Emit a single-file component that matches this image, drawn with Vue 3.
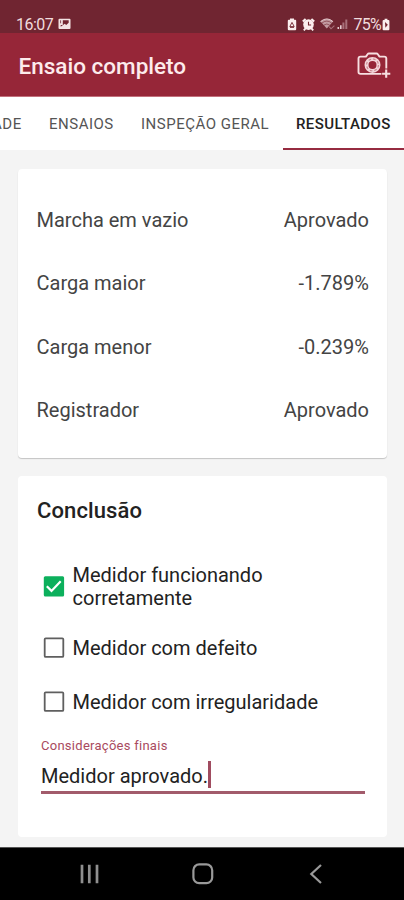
<template>
  <div class="screen">
    <!-- barra de status -->
    <div class="status-bar">
      <div class="status-left">
        <span class="clock">16:07</span>
        <svg class="picture-icon" width="13" height="12" viewBox="0 0 13 12">
          <rect x="0.5" y="0.7" width="12" height="10.4" rx="1" fill="#f3e3e4" />
          <path d="M4.8 2.3h5.9v2.4l-2.5 2.2-1.5-1.1-4 2.9V6.9h2.1z" fill="#722530" />
          <path d="M2.6 2.3v3" stroke="#722530" stroke-width="0.8" />
        </svg>
      </div>
      <div class="status-right">
        <svg width="10" height="13" viewBox="0 0 10 13">
          <path d="M3 0.5h4v1.2h1.2q1 0 1 1v8.6q0 1-1 1H1.8q-1 0-1-1V2.7q0-1 1-1H3z" fill="#fbeeee" />
          <path d="M5 4.4L7.2 8.6H2.8zM3 9.4h4" fill="none" stroke="#722530" stroke-width="0.9" />
        </svg>
        <svg class="alarm-icon" width="13" height="13" viewBox="0 0 13 13">
          <path d="M0.8 3.4L3.6 0.9M12.2 3.4L9.4 0.9" stroke="#fbeeee" stroke-width="2" />
          <path d="M1.8 12.4l2-2.2M11.2 12.4l-2-2.2" stroke="#fbeeee" stroke-width="1.9" />
          <circle cx="6.5" cy="6.6" r="5.3" fill="#fbeeee" />
          <path d="M6.5 3.8v3.2h2.6" fill="none" stroke="#722530" stroke-width="1.1" />
        </svg>
        <svg class="wifi-icon" width="15" height="12" viewBox="0 0 15 12">
          <path d="M0.5 3.6Q6.8-1.8 13.1 3.6L6.8 10.4z" fill="#c39aa0" />
          <path d="M2 5q4.8-3.8 9.6 0M4 7q2.8-2 5.6 0" fill="none" stroke="#722530" stroke-width="0.6" />
          <path d="M0.5 3.6Q6.8-1.8 13.1 3.6" fill="none" stroke="#e5ccd0" stroke-width="1" />
          <path d="M9.2 8.6l1.8 2.2L14.4 7.6" fill="none" stroke="#a8717a" stroke-width="1.1" />
        </svg>
        <svg class="signal-icon" width="11" height="12" viewBox="0 0 11 12">
          <path d="M1.3 11V9M3.8 11V7.2" stroke="#e5ccd0" stroke-width="1.6" />
          <path d="M6.4 11V4.4M9.3 11V1.4" stroke="#a8717a" stroke-width="2" />
        </svg>
        <span class="percent">75%</span>
        <svg class="battery-icon" width="8" height="13" viewBox="0 0 8 13">
          <path d="M2.6 0.8h2.8v1.3h1q1 0 1 1v8.2q0 1-1 1H1.6q-1 0-1-1V3.1q0-1 1-1h1z" fill="#fbeeee" />
          <path d="M3 4l2.8 2.7L3.4 9.8z" fill="#722530" />
        </svg>
      </div>
    </div>

    <header class="app-bar">
      <h1>Ensaio completo</h1>
      <svg class="camera-icon" width="34" height="26" viewBox="0 0 34 26">
        <g fill="none" stroke="#f7dfe1" stroke-width="1.9" stroke-linejoin="round">
          <path d="M24.4 21.9H3.5q-2 0-2-2V6.6q0-2 2-2h5.4l1.7-2.4q0.5-0.7 1.3-0.7h7.6q0.8 0 1.3 0.7l1.7 2.4h4.8q2 0 2 2v9.8" />
          <path d="M29.2 17.6v8.2M25.1 21.7h8.2" stroke-width="2.1" />
        </g>
        <circle cx="15.5" cy="12.9" r="6" fill="none" stroke="#f3d5d9" stroke-width="4" />
        <circle cx="15.5" cy="12.9" r="5.9" fill="none" stroke="#c9828c" stroke-width="1.1" stroke-dasharray="2.6 2" />
      </svg>
    </header>

    <nav class="tabs">
      <span class="tab tab-ade">ADE</span>
      <span class="tab tab-ensaios">ENSAIOS</span>
      <span class="tab tab-geral">INSPEÇÃO GERAL</span>
      <span class="tab tab-active">RESULTADOS</span>
    </nav>

    <main class="content">
      <section class="card results">
        <div v-for="row in rows" :key="row.label" class="row">
          <span>{{ row.label }}</span>
          <span>{{ row.value }}</span>
        </div>
      </section>

      <section class="card conclusion">
        <h2>Conclusão</h2>
        <div v-for="(option, index) in options" :key="index" class="option" @click="selected = index">
          <svg class="box" width="22" height="22" viewBox="0 0 22 22">
            <template v-if="selected === index">
              <rect x="0.8" y="0.3" width="20.3" height="20.3" rx="1.5" fill="#0cb05c" />
              <path d="M3.8 10.2l4.7 4.7 9.2-9.6" fill="none" stroke="#fff" stroke-width="2.2" />
            </template>
            <rect v-else x="1.7" y="1.3" width="18.6" height="18.6" rx="1" fill="none" stroke="#5f5f5f" stroke-width="1.8" />
          </svg>
          <span class="option-text">{{ option }}</span>
        </div>

        <div class="field">
          <label>Considerações finais</label>
          <div class="field-input">
            <span class="field-text">{{ notes }}</span>
            <i class="caret"></i>
          </div>
        </div>
      </section>
    </main>

    <!-- botões de navegação -->
    <footer class="nav-bar">
      <svg width="20" height="20" viewBox="0 0 20 20">
        <path d="M3 0.8v18.4M10.3 0.8v18.4M18 0.8v18.4" stroke="#8f8f8f" stroke-width="2.7" />
      </svg>
      <svg width="22" height="22" viewBox="0 0 22 22">
        <rect x="1.4" y="1.4" width="18.8" height="18.8" rx="5.8" fill="none" stroke="#999" stroke-width="2.2" />
      </svg>
      <svg width="14" height="20" viewBox="0 0 14 20">
        <path d="M12 1L2.3 10 12 19" fill="none" stroke="#999" stroke-width="2.2" />
      </svg>
    </footer>
  </div>
</template>

<script setup>
import { ref } from 'vue';

const rows = [
  { label: 'Marcha em vazio', value: 'Aprovado' },
  { label: 'Carga maior', value: '-1.789%' },
  { label: 'Carga menor', value: '-0.239%' },
  { label: 'Registrador', value: 'Aprovado' }
];

const options = [
  'Medidor funcionando corretamente',
  'Medidor com defeito',
  'Medidor com irregularidade'
];

const selected = ref(0);
const notes = ref('Medidor aprovado.');
</script>

<style>
body {
  background: #f4f4f4;
}
</style>

<style scoped>
.screen {
  display: flex;
  flex-direction: column;
  width: 404px;
  height: 900px;
  overflow: hidden;
  background: #f4f4f4;
  font-family: Roboto, "Liberation Sans", sans-serif;
  color: #222;
}

.screen * {
  box-sizing: border-box;
}

svg {
  display: block;
  flex: none;
}

/* barra de status */
.status-bar {
  display: flex;
  justify-content: space-between;
  flex: none;
  height: 33px;
  padding: 15px 14px 0 16px;
  background: #702531;
  color: #f1dcde;
}

.status-left,
.status-right {
  display: flex;
  align-items: center;
  height: 18px;
}

.clock {
  font-size: 16px;
  letter-spacing: -0.5px;
}

.picture-icon {
  margin-left: 5px;
}

.alarm-icon {
  margin-left: 5px;
}

.wifi-icon {
  margin-left: 5px;
}

.signal-icon {
  margin-left: 2px;
}

.percent {
  margin-left: 5px;
  font-size: 16px;
  letter-spacing: -0.7px;
}

.battery-icon {
  margin-left: 1px;
}

/* cabeçalho */
.app-bar {
  display: flex;
  justify-content: space-between;
  align-items: flex-start;
  flex: none;
  height: 63px;
  padding: 19px 13px 0 18.5px;
  background: #962638;
  color: #fdebec;
}

h1 {
  margin: 0;
  font-size: 22.5px;
  line-height: 29px;
  font-weight: 500;
  white-space: nowrap;
}

/* abas */
.tabs {
  display: flex;
  flex: none;
  height: 54px;
  border-top: 1px solid #c2707c;
  background: #fff;
  overflow: hidden;
}

.tab {
  flex: none;
  font-size: 15px;
  line-height: 55px;
  letter-spacing: 0.5px;
  white-space: nowrap;
  color: #555;
}

.tab-ade {
  width: 50px;
  margin-left: -8px;
}

.tab-ensaios {
  width: 92px;
  margin-left: 7px;
}

.tab-geral {
  width: 142px;
}

.tab-active {
  width: 121px;
  padding-left: 13px;
  border-bottom: 2px solid #962b40;
  letter-spacing: 0.4px;
  color: #222;
  font-weight: 500;
}

/* conteúdo */
.content {
  flex: 1;
  display: flex;
  flex-direction: column;
  gap: 18px;
  padding: 19px 17px 0 18px;
}

.card {
  flex: none;
  border-radius: 4px;
  background: #fff;
}

.results {
  height: 289px;
  padding: 19px 18px 0 18.5px;
  box-shadow: 0 1px 1px rgba(0, 0, 0, 0.2);
}

.row {
  display: flex;
  align-items: center;
  justify-content: space-between;
  height: 63.5px;
  font-size: 20px;
  color: #444;
}

.conclusion {
  height: 361px;
  padding: 21px 22px 0 19px;
}

h2 {
  margin: 0 0 33px;
  font-size: 22px;
  line-height: 28px;
  font-weight: 500;
  letter-spacing: 0.1px;
}

.option {
  display: flex;
  align-items: center;
  height: 54px;
  padding-left: 6px;
}

.option-text {
  width: 260px;
  margin-left: 7.5px;
  font-size: 20px;
  line-height: 23px;
}

.option:nth-of-type(1) {
  height: 57px;
  margin-bottom: 6px;
}

.option:nth-of-type(1) .option-text {
  width: 210px;
}

.field {
  margin: 7px 0 0 4px;
}

label {
  display: block;
  height: 19px;
  font-size: 13px;
  line-height: 19px;
  letter-spacing: 0.27px;
  color: #a94a60;
}

.field-input {
  display: flex;
  align-items: center;
  width: 324px;
  height: 39px;
  padding-top: 5px;
  border-bottom: 3px solid #a25b6b;
}

.field-text {
  font-size: 20px;
}

.caret {
  width: 3px;
  height: 27px;
  margin-bottom: 3px;
  background: #a04c60;
}

/* barra de navegação */
.nav-bar {
  display: flex;
  align-items: center;
  flex: none;
  height: 53px;
  padding-left: 79px;
  border-top: 1px solid #555;
  background: #000;
}

.nav-bar svg:nth-child(2) {
  margin-left: 93px;
}

.nav-bar svg:nth-child(3) {
  margin-left: 95px;
}
</style>
